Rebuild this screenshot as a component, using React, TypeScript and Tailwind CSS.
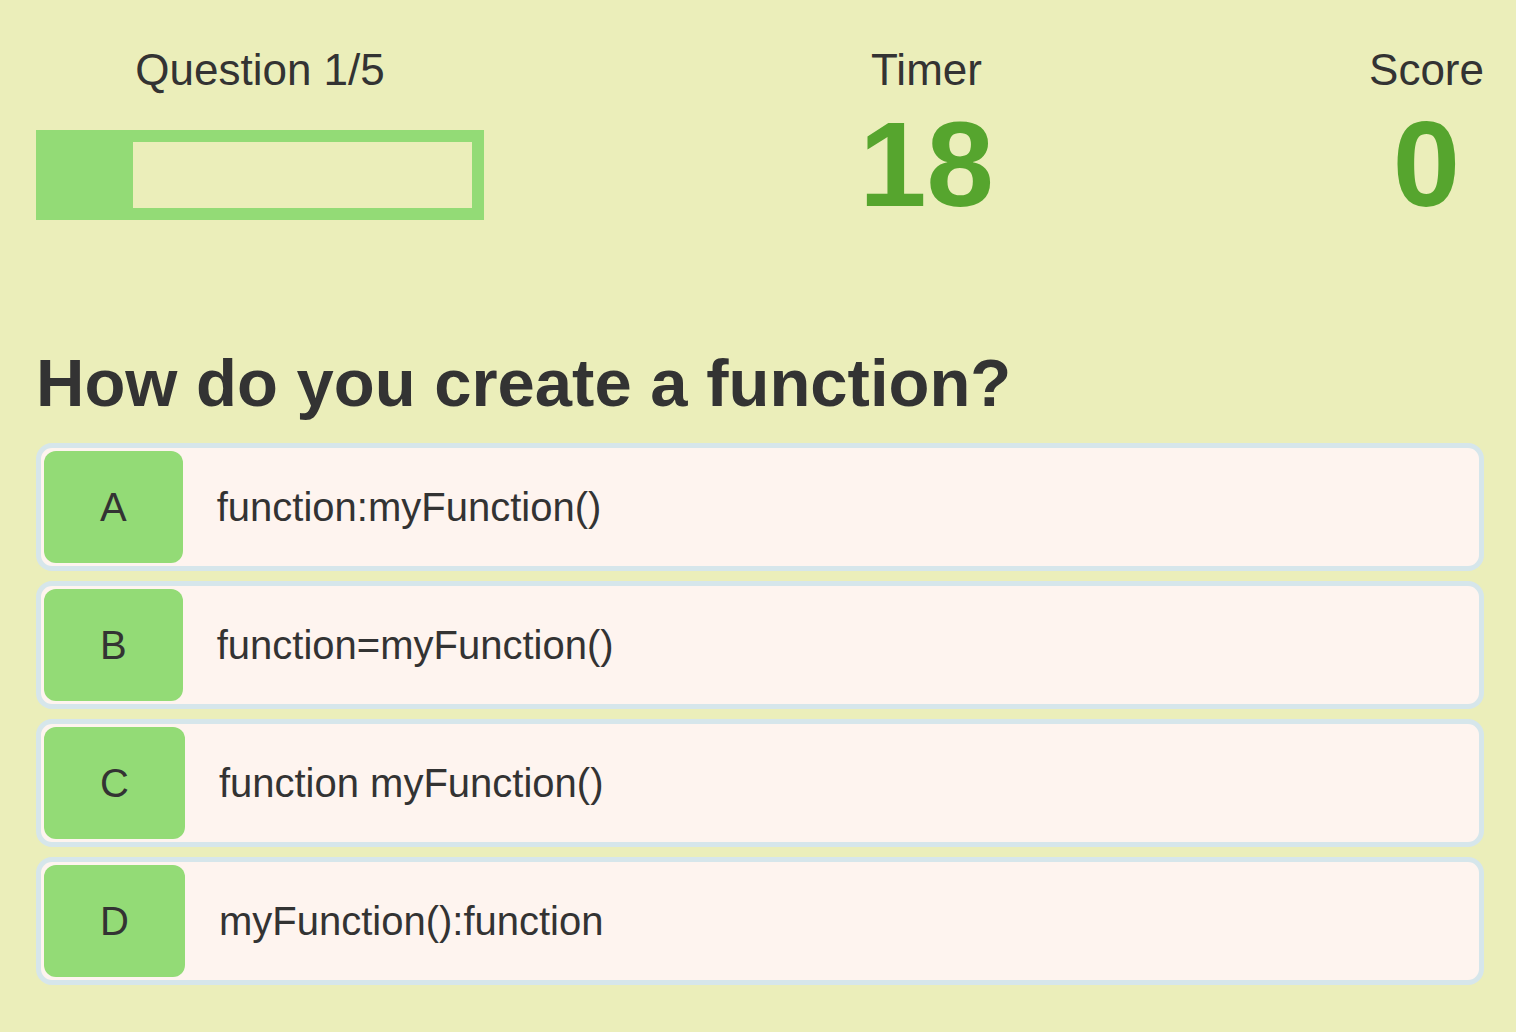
import React from "react";

const OPTIONS = [
  { letter: "A", text: "function:myFunction()" },
  { letter: "B", text: "function=myFunction()" },
  { letter: "C", text: "function myFunction()" },
  { letter: "D", text: "myFunction():function" },
];

function StatBlock({ label, value }: { label: string; value: string }) {
  return (
    <div className="flex flex-col items-center">
      <div className="text-[44px] leading-[50px]">{label}</div>
      <div className="mt-[9px] text-[121px] leading-[121px] font-bold text-[#56a52e]">{value}</div>
    </div>
  );
}

export default function App() {
  const progress = 20;

  return (
    <div
      className="min-h-screen bg-[#ebeeba] text-[#333333] pl-9 pr-8 pt-[45px] pb-10"
      style={{ fontFamily: '"Liberation Sans", Arial, sans-serif' }}
    >
      {/* Header: question counter, timer, score */}
      <div className="flex justify-between items-start">
        <div className="flex flex-col items-center w-[448px]">
          <div className="text-[44px] leading-[50px]">Question 1/5</div>
          <div className="mt-[35px] w-full h-[90px] border-[12px] border-[#93db76]">
            <div className="h-full bg-[#93db76]" style={{ width: `${progress}%` }} />
          </div>
        </div>
        <StatBlock label="Timer" value="18" />
        <StatBlock label="Score" value="0" />
      </div>

      <h2 className="mt-[118px] text-[67px] leading-[80px] font-bold">How do you create a function?</h2>

      <div className="mt-[20px] flex flex-col gap-[10px]">
        {OPTIONS.map((o) => (
          <div
            key={o.letter}
            className="flex items-center p-[3px] rounded-[16px] border-[5px] border-[#d6e6eb] bg-[#fef4ef] cursor-pointer"
          >
            <div className="h-[112px] px-14 flex items-center justify-center rounded-[12px] bg-[#93db76] text-[40px]">
              {o.letter}
            </div>
            <div className="ml-[34px] text-[40px]">{o.text}</div>
          </div>
        ))}
      </div>
    </div>
  );
}
